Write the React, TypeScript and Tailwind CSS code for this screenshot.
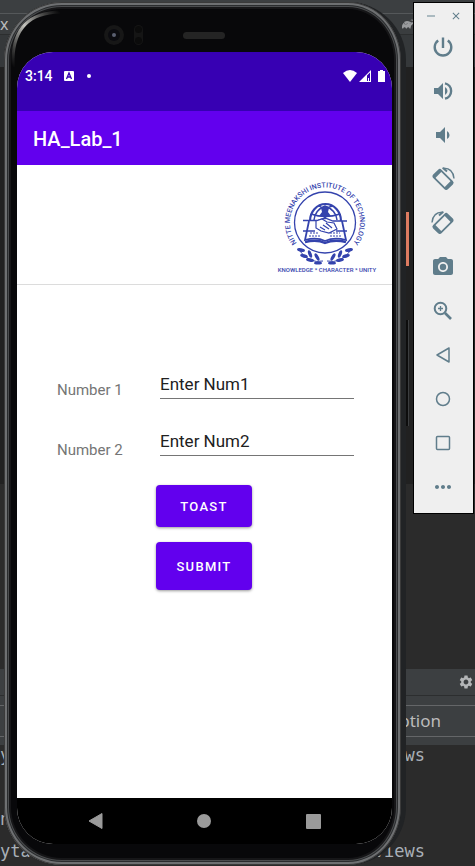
import React from "react";
import { MdVolumeDown, MdCameraAlt, MdMoreHoriz, MdSettings, MdClose } from "react-icons/md";
import { SiGradle } from "react-icons/si";

const mono = "font-['DejaVu_Sans_Mono',monospace]";

function EditorRow({ left, right }: { left: string; right: string }) {
  return (
    <div className="flex h-5 justify-between whitespace-pre pr-[50px] leading-5">
      <span>{left}</span>
      <span>{right}</span>
    </div>
  );
}

function IdeBackground() {
  return (
    <div aria-hidden="true" className="absolute inset-0 flex flex-col overflow-hidden bg-[#2b2b2b]">
      <div className="h-[14px] border-b border-[#55585a] bg-[#3c3f41]" />
      <div className="flex h-[21px] items-center justify-between border-b border-[#2c2e2f] bg-[#3a3d3f] pr-[61px] font-['Noto_Sans',sans-serif] text-base leading-5 text-[#bbbbbb]">
        <span>x</span>
        <SiGradle className="size-3 text-[#9a9c9e]" />
      </div>
      <div className="h-8 bg-[#35383a]" />
      <div className="h-[417px] bg-[#212121]" />
      <div className="h-[185px] bg-[#2b2b2b]" />
      <div className="flex h-[27px] items-center justify-end border-b border-[#2c2e2f] bg-[#3c3f41] pr-px">
        <MdSettings className="size-4 text-[#b4b6b8]" />
      </div>
      <div className="bg-[#3c3f41] pb-2 pt-[9px]">
        <div className="flex h-8 items-center justify-end border-y border-[#646668] pr-[34px] font-['Noto_Sans',sans-serif] text-[17px] leading-6 text-[#bbbbbb]">
          <span>Descrip</span>
          <span>tion</span>
        </div>
      </div>
      <div className={`flex flex-1 flex-col gap-3 text-[17px] text-[#a9b0b8] ${mono}`}>
        <EditorRow left="y" right="views" />
        <EditorRow left=" " right=" " />
        <EditorRow left="n" right=" " />
        <EditorRow left="yta" right="views" />
      </div>
    </div>
  );
}

function CollegeLogo() {
  return (
    <svg
      viewBox="0 0 100 100"
      className="size-[100px] overflow-visible"
      role="img"
      aria-label="Nitte Meenakshi Institute of Technology"
    >
      <defs>
        <path id="ring-text" d="M35.2 77.2 A35 35 0 1 1 64.8 77.2" fill="none" />
      </defs>
      <g fill="none" stroke="#3443ad">
        <circle cx="50" cy="45.500" r="30.500" strokeWidth="1.300" />
        <path d="M35 44 A15.500 17 0 0 1 66 44" strokeWidth="2.200" />
        <path d="M39 43 Q40 33 50 29 Q61 33 62 43 M36 37 Q50 42 65 37 M44 29 Q50 33 57 29 M50 29 V42" strokeWidth="1.500" />
        <path d="M28 43.500 H42 L50 41 L58 44 H72 M28 54 H40 M61 54 H72" strokeWidth="1.300" />
        <path d="M34 44 L30 63 Q42 60 50 64 Q59 60 71 63 L67 44" strokeWidth="1.800" />
        <path d="M35 56 h9 M34 59 h11 M55 56 h10 M55 59 h11" strokeWidth="1" strokeDasharray="2 1" />
        <path d="M30 65 Q42 62 50 66 Q59 62 71 65" strokeWidth="2.400" />
        <path d="M41 44 L47 42 L52 45 L59 46 L62 52 L54 56 L46 54 L41 51 Z M45 50 l5 3 M48 48 l6 4 M51 46 l6 5" fill="#ffffff" strokeWidth="1.200" />
        <path d="M24 73 Q34 87 48 84 M76 73 Q66 87 52 84" strokeWidth="1" />
      </g>
      <g fill="#3443ad">
        <path d="M46 31 q4 -4 8 0 l-1 4 l3 4 h-4 l-2 4 l-2 -4 h-4 l3 -4 Z" />
        <ellipse cx="26" cy="73" rx="4" ry="1.700" transform="rotate(10 26 73)" />
        <ellipse cx="29" cy="79" rx="4" ry="1.700" transform="rotate(15 29 79)" />
        <ellipse cx="35" cy="77" rx="4" ry="1.700" transform="rotate(70 35 77)" />
        <ellipse cx="35" cy="83" rx="4" ry="1.700" transform="rotate(10 35 83)" />
        <ellipse cx="42" cy="80" rx="4" ry="1.700" transform="rotate(60 42 80)" />
        <ellipse cx="43" cy="86" rx="4" ry="1.600" />
        <ellipse cx="74" cy="73" rx="4" ry="1.700" transform="rotate(-10 74 73)" />
        <ellipse cx="71" cy="79" rx="4" ry="1.700" transform="rotate(-15 71 79)" />
        <ellipse cx="65" cy="77" rx="4" ry="1.700" transform="rotate(-70 65 77)" />
        <ellipse cx="65" cy="83" rx="4" ry="1.700" transform="rotate(-10 65 83)" />
        <ellipse cx="58" cy="80" rx="4" ry="1.700" transform="rotate(-60 58 80)" />
        <ellipse cx="57" cy="86" rx="4" ry="1.600" />
        <text className="font-[Roboto,sans-serif] text-[7px] font-medium">
          <textPath href="#ring-text" startOffset="50%" textAnchor="middle">
            NITTE MEENAKSHI INSTITUTE OF TECHNOLOGY
          </textPath>
        </text>
        <text x="52" y="95" textAnchor="middle" className="font-[Roboto,sans-serif] text-[6px] font-medium">
          KNOWLEDGE * CHARACTER * UNITY
        </text>
      </g>
    </svg>
  );
}

function StatusBar() {
  return (
    <div className="flex h-[59px] items-start justify-between bg-[#3700b3] pl-2 pr-[7px] pt-4 text-white">
      <div className="flex h-4 items-center">
        <span className="text-sm font-medium leading-4">3:14</span>
        <svg viewBox="0 0 10 10" className="ml-[11px] size-[10px]">
          <rect width="10" height="10" rx="1" fill="#ffffff" />
          <path d="M2.500 8 L5 2 L7.500 8 M3.500 6 H6.500" stroke="#3700b3" strokeWidth="1.300" fill="none" />
        </svg>
        <span className="ml-[13px] size-1 rounded-full bg-white" />
      </div>
      <div className="flex h-4 items-center">
        <svg viewBox="0 0 14 12" className="h-3 w-[14px]" fill="#ffffff">
          <path d="M0 3 Q7 -3 14 3 L7 12 Z" />
        </svg>
        <svg viewBox="0 0 12 12" className="ml-[2px] size-3" fill="#ffffff">
          <path fillRule="evenodd" d="M0 12 L12 0 V12 Z M8 5.500 V11 H11 V2.500 Z" />
          <path d="M9 8 h1 v3 h-1 Z" />
        </svg>
        <svg viewBox="0 0 7 12" className="ml-[7px] h-3 w-[7px]" fill="#ffffff">
          <path d="M2 0 H5 V1 H7 V12 H0 V1 H2 Z" />
        </svg>
      </div>
    </div>
  );
}

const fieldLabel = "block text-[15px] leading-5 text-[#757575]";
const fieldInput =
  "h-7 w-full border-b border-[#757575] bg-transparent pb-0.5 text-[17px] leading-6 text-[#212121] outline-none";
const actionButton =
  "w-24 rounded-[4px] bg-[#6200ee] pt-0.5 text-[13px] font-medium tracking-widest text-white shadow-[0_1px_3px_rgba(0,0,0,0.4)]";

function PhoneScreen() {
  return (
    <div className="flex flex-col overflow-hidden rounded-[36px] bg-white font-[Roboto,sans-serif]">
      <StatusBar />
      <header className="flex h-[54px] items-center bg-[#6200ee] pl-4 pt-0.5">
        <h1 className="text-xl font-medium leading-6 text-white">HA_Lab_1</h1>
      </header>
      <main className="h-[633px]">
        <div className="flex h-[120px] items-start justify-end border-b border-[#dcdcdc] pr-[17px] pt-3">
          <CollegeLogo />
        </div>
        <form className="pl-10 pr-[38px] pt-[86px]" onSubmit={(e) => e.preventDefault()}>
          <div className="flex h-[114px] items-start">
            <div className="flex w-[103px] shrink-0 flex-col gap-10 pt-[9px]">
              <label htmlFor="num1" className={fieldLabel}>
                Number 1
              </label>
              <label htmlFor="num2" className={fieldLabel}>
                Number 2
              </label>
            </div>
            <div className="flex min-w-0 flex-1 flex-col gap-[29px]">
              <input id="num1" type="text" defaultValue="Enter Num1" className={fieldInput} />
              <input id="num2" type="text" defaultValue="Enter Num2" className={fieldInput} />
            </div>
          </div>
          <div className="flex flex-col items-start gap-[15px] pl-[99px]">
            <button type="button" className={`h-[42px] ${actionButton}`}>
              TOAST
            </button>
            <button type="submit" className={`h-12 ${actionButton}`}>
              SUBMIT
            </button>
          </div>
        </form>
      </main>
      <nav className="flex h-[46px] items-center justify-around bg-black px-6 text-[#9a9a9a]">
        <button type="button" aria-label="Back">
          <svg viewBox="0 0 15 16" className="h-4 w-[15px]" fill="currentColor">
            <path d="M1 8 L14 0.500 V15.500 Z" stroke="currentColor" strokeLinejoin="round" />
          </svg>
        </button>
        <button type="button" aria-label="Home" className="size-[14px] rounded-full bg-[#9a9a9a]" />
        <button type="button" aria-label="Overview" className="size-[15px] rounded-[1px] bg-[#9a9a9a]" />
      </nav>
    </div>
  );
}

function Phone() {
  return (
    <section
      aria-label="Phone"
      className="relative min-w-0 flex-1 rounded-[58px] border-r-[5px] border-[#212325] bg-[#08080a] pb-[21px] pl-[13px] pr-[9px] shadow-[inset_0_0_0_1px_#3a3a3a,inset_0_0_0_3px_#6e7072,inset_0_0_0_4px_#2a2c2e,inset_0_0_0_5px_#4a4c4e,inset_0_0_0_7px_#161618]"
    >
      <div className="flex h-[50px] items-center pl-[87px] pt-4">
        <div className="flex size-5 items-center justify-center rounded-full bg-[#171717]">
          <div className="flex size-3 items-center justify-center rounded-full bg-[#0b0b10]">
            <div className="size-1 rounded-full bg-[#5b6072]" />
          </div>
        </div>
        <div className="ml-[10px] flex h-5 w-[9px] flex-col items-center justify-between rounded-full bg-[#151515] p-px">
          <div className="size-[7px] rounded-full bg-[#0b0b0b]" />
          <div className="size-[7px] rounded-full bg-[#0b0b0b]" />
        </div>
        <div className="ml-10 h-[7px] w-[42px] rounded-full bg-[#242424]" />
      </div>
      <PhoneScreen />
      <svg viewBox="0 0 50 60" className="absolute left-[6px] top-[7px] h-[60px] w-[50px]" fill="none">
        <defs>
          <linearGradient id="rim" x1="0" y1="1" x2="1" y2="0">
            <stop offset="0" stopColor="#8a8a86" stopOpacity="0" />
            <stop offset="0.500" stopColor="#c4c4be" />
            <stop offset="1" stopColor="#8a8a86" stopOpacity="0" />
          </linearGradient>
        </defs>
        <path d="M3 58 V50 Q4 4 50 3" stroke="url(#rim)" strokeWidth="3" />
      </svg>
      <div className="absolute -right-[8px] top-[210px] h-[54px] w-[3px] bg-[#dd7b60]" />
      <div className="absolute -right-[8px] top-[318px] h-[106px] w-[3px] border-r border-[#3c3e40] bg-[#0d0d0d]" />
    </section>
  );
}

function RotateIcon({ mirrored = false }: { mirrored?: boolean }) {
  return (
    <svg viewBox="0 0 24 24" className={mirrored ? "size-6 -scale-x-100" : "size-6"} fill="none" stroke="currentColor">
      <g transform="rotate(-45 12 12.500)">
        <rect x="7" y="3" width="10" height="19" rx="1.500" strokeWidth="1.800" />
        <path d="M7 4.500 H17 M7 20.500 H17" strokeWidth="3" />
      </g>
      <path d="M11.500 1.300 Q22 0.500 23 11.500" strokeWidth="1.400" />
      <path d="M12 1 L16 4.500" strokeWidth="2" />
    </svg>
  );
}

function OutlineIcon({ children, weight }: { children: React.ReactNode; weight: number }) {
  return (
    <svg
      viewBox="0 0 24 24"
      className="size-6"
      fill="none"
      stroke="currentColor"
      strokeWidth={weight}
      strokeLinejoin="round"
    >
      {children}
    </svg>
  );
}

const tools: { name: string; icon: React.ReactNode }[] = [
  {
    name: "Power",
    icon: (
      <OutlineIcon weight={2.4}>
        <path d="M12 2.500 V13 M7.200 5.500 A8.300 8.300 0 1 0 16.800 5.500" />
      </OutlineIcon>
    ),
  },
  {
    name: "Volume up",
    icon: (
      <OutlineIcon weight={2.4}>
        <path d="M3 9 V15 H7 L12 20 V4 L7 9 Z" fill="currentColor" stroke="none" />
        <path d="M14 8 Q16.500 9.300 16.500 12 Q16.500 14.700 14 16 Z" fill="currentColor" stroke="none" />
        <path d="M14 4.300 A7.900 7.900 0 0 1 14 19.700" />
      </OutlineIcon>
    ),
  },
  { name: "Volume down", icon: <MdVolumeDown className="size-6" /> },
  { name: "Rotate left", icon: <RotateIcon /> },
  { name: "Rotate right", icon: <RotateIcon mirrored /> },
  { name: "Take screenshot", icon: <MdCameraAlt className="size-6" /> },
  {
    name: "Zoom",
    icon: (
      <OutlineIcon weight={2}>
        <circle cx="9.500" cy="9.500" r="5.800" />
        <path d="M14 14 L20 20" strokeWidth="2.600" />
        <path d="M9.500 7 V12 M7 9.500 H12" strokeWidth="1.300" />
      </OutlineIcon>
    ),
  },
  {
    name: "Back",
    icon: (
      <OutlineIcon weight={1.5}>
        <path d="M6 12 L18 5 V19 Z" />
      </OutlineIcon>
    ),
  },
  {
    name: "Home",
    icon: (
      <OutlineIcon weight={1.5}>
        <circle cx="12" cy="12" r="6.500" />
      </OutlineIcon>
    ),
  },
  {
    name: "Overview",
    icon: (
      <OutlineIcon weight={1.5}>
        <rect x="5.500" y="5.500" width="13" height="13" rx="1" />
      </OutlineIcon>
    ),
  },
  { name: "More", icon: <MdMoreHoriz className="size-6" /> },
];

function EmulatorToolbar() {
  return (
    <aside
      aria-label="Emulator controls"
      className="flex w-[61px] shrink-0 flex-col self-start border border-black bg-[#efefef] pb-1 pr-px text-[#607d8b]"
    >
      <div className="flex h-[22px] items-center justify-center gap-[13px] pt-1">
        <button type="button" aria-label="Minimize" className="text-[#94a8b0]">
          <svg viewBox="0 0 12 12" className="size-3" stroke="currentColor" strokeWidth="1.500">
            <path d="M2 6 H10" />
          </svg>
        </button>
        <button type="button" aria-label="Close">
          <MdClose className="size-3" />
        </button>
      </div>
      {tools.map((tool) => (
        <button key={tool.name} type="button" aria-label={tool.name} className="flex h-11 items-center justify-center">
          {tool.icon}
        </button>
      ))}
    </aside>
  );
}

export default function App() {
  return (
    <div className="relative min-h-screen overflow-hidden">
      <IdeBackground />
      <div className="relative flex items-stretch gap-[7px] pl-1 pr-px pt-0.5">
        <Phone />
        <EmulatorToolbar />
      </div>
    </div>
  );
}
